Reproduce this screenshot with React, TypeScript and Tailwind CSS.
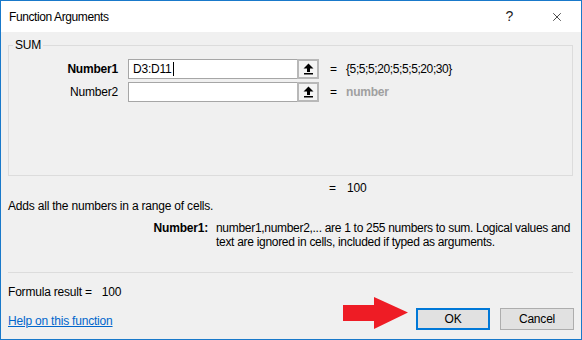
import { X } from "lucide-react";

function RefButton() {
  return (
    <div className="w-[22px] h-[20px] bg-[#b8b8b8] p-[2px] flex">
      <div className="flex-1 bg-[#f4f4f4] flex items-center justify-center">
        <svg width="11" height="12" viewBox="0 0 11 12">
          <path d="M5.5 0.5 L10.5 5.5 L7 5.5 L7 9 L4 9 L4 5.5 L0.5 5.5 Z" fill="#000" />
          <rect x="1" y="10" width="9" height="1.5" fill="#000" />
        </svg>
      </div>
    </div>
  );
}

function ArgRow({ label, bold, value, valueClass }: { label: string; bold?: boolean; value: string; valueClass: string }) {
  return (
    <div className="flex items-center h-[20px]">
      <div className={"w-[119px] text-right pr-[10px] " + (bold ? "font-bold" : "")}>{label}</div>
      <div className="w-[169px] h-[20px] bg-white border border-[#a6a6a6] border-r-0 flex items-center pl-[4px]">
        {bold ? (
          <span className="flex items-center">
            D3:D11<span className="inline-block w-px h-[14px] bg-black ml-[1px]" />
          </span>
        ) : null}
      </div>
      <RefButton />
      <div className="ml-[11px] w-[16px]">=</div>
      <div className={valueClass}>{value}</div>
    </div>
  );
}

export default function App() {
  return (
    <div className="relative w-[582px] h-[340px] border border-[#1979ca] bg-[#f0f0f0] flex flex-col text-[12px] tracking-[-0.2px] text-black font-['Liberation_Sans',Arial,sans-serif]">
      <div className="h-[31px] bg-white flex items-center pl-[8px] shrink-0">
        <span className="flex-1 tracking-[-0.4px]">Function Arguments</span>
        <span className="text-[14px] mr-[37px] text-[#222]">?</span>
        <X size={14} strokeWidth={1.2} className="mr-[17px]" />
      </div>

      <div className="relative mt-[13px] ml-[7px] mr-[8px] h-[131px] border border-[#dcdcdc] pt-[13px]">
        <span className="absolute -top-[8px] left-[4px] px-[2px] bg-[#f0f0f0] leading-[15px]">SUM</span>
        <div className="flex flex-col gap-[3px]">
          <ArgRow label="Number1" bold value="{5;5;5;20;5;5;5;20;30}" valueClass="tracking-[-0.4px]" />
          <ArgRow label="Number2" value="number" valueClass="text-[#a0a0a0] font-bold" />
        </div>
      </div>

      <div className="flex h-[15px] mt-[5px] leading-[15px]">
        <div className="ml-[328px] w-[18px]">=</div>
        <div>100</div>
      </div>
      <div className="ml-[7px] mt-[3px] leading-[15px]">Adds all the numbers in a range of cells.</div>

      <div className="flex mt-[7px] leading-[14px]">
        <div className="w-[207px] text-right font-bold">Number1:</div>
        <div className="ml-[8px] whitespace-nowrap tracking-[-0.3px]">
          number1,number2,... are 1 to 255 numbers to sum. Logical values and
          <br />
          text are ignored in cells, included if typed as arguments.
        </div>
      </div>

      <div className="mt-auto ml-[7px] mr-[8px] border-t border-[#dcdcdc]" />
      <div className="flex items-start justify-between ml-[7px] mr-[7px] mb-[9px]">
        <div className="flex flex-col">
          <div className="mt-[12px] leading-[15px]">
            Formula result =<span className="ml-[10px]">100</span>
          </div>
          <a href="#" className="mt-[14px] leading-[15px] text-[#0066cc] underline">
            Help on this function
          </a>
        </div>
        <div className="flex gap-[10px] mt-[35px]">
          <button className="w-[74px] h-[22px] border-2 border-[#0078d7] bg-[#e1e1e1]">OK</button>
          <button className="w-[74px] h-[22px] border border-[#adadad] bg-[#e1e1e1]">Cancel</button>
        </div>
      </div>

      <svg className="absolute left-[341px] top-[295px]" width="67" height="34" viewBox="0 0 67 34">
        <path d="M1 9 L32 9 L32 1 L66 16.5 L32 33 L32 25 L1 25 Z" fill="#ee1c25" />
      </svg>
    </div>
  );
}
